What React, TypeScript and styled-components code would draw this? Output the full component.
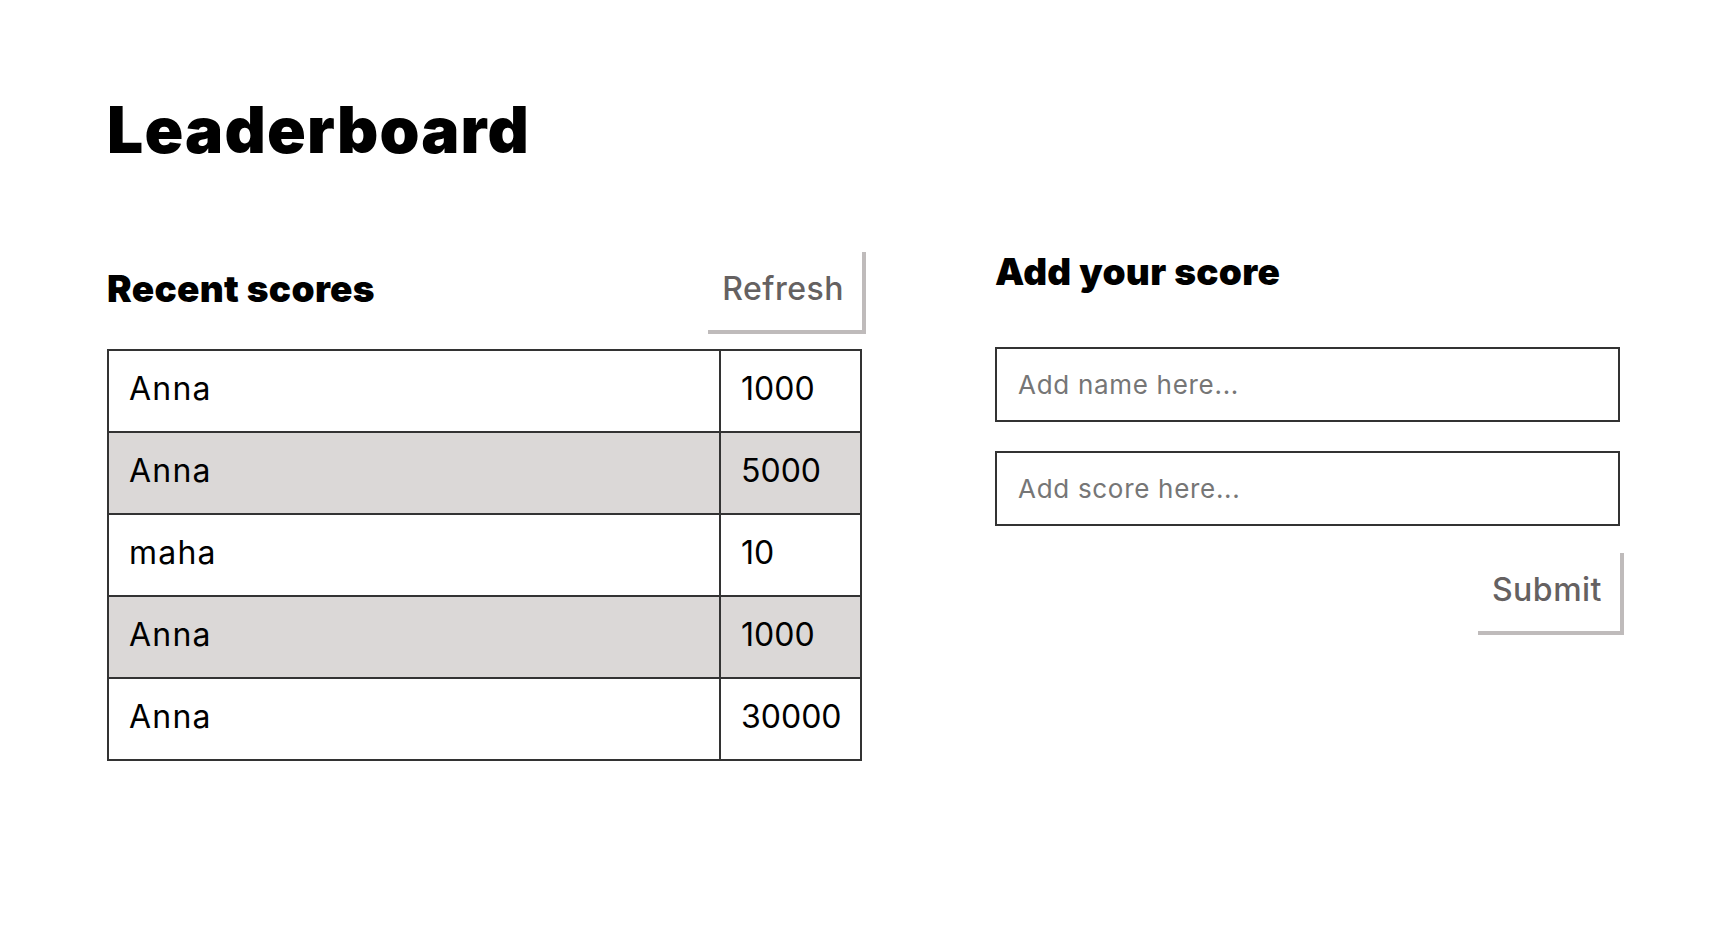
import styled, { createGlobalStyle } from "styled-components";

const scores = [
  { name: "Anna", score: 1000 },
  { name: "Anna", score: 5000 },
  { name: "maha", score: 10 },
  { name: "Anna", score: 1000 },
  { name: "Anna", score: 30000 },
];

export default function App() {
  return (
    <>
      <GlobalStyle />
      <S.Page>
        <S.Title>Leaderboard</S.Title>
        <S.Columns>
          <S.Section>
            <S.Header>
              <S.Heading>Recent scores</S.Heading>
              <S.Button type="button">Refresh</S.Button>
            </S.Header>
            <S.Table>
              <colgroup>
                <col />
                <S.ScoreCol />
              </colgroup>
              <tbody>
                {scores.map(({ name, score }, i) => (
                  <S.Row key={i} $shaded={i % 2 === 1}>
                    <S.Cell>{name}</S.Cell>
                    <S.Cell $narrow>{score}</S.Cell>
                  </S.Row>
                ))}
              </tbody>
            </S.Table>
          </S.Section>

          <S.Form onSubmit={(e) => e.preventDefault()}>
            <S.FormHeading>Add your score</S.FormHeading>
            <S.Input type="text" placeholder="Add name here..." />
            <S.Input type="text" placeholder="Add score here..." />
            <S.Actions>
              <S.Button type="submit">Submit</S.Button>
            </S.Actions>
          </S.Form>
        </S.Columns>
      </S.Page>
    </>
  );
}

const GlobalStyle = createGlobalStyle`
  body {
    margin: 0;
    background: #fff;
    font-family: Inter, "Open Sans", sans-serif;
    color: #000;
  }
`;

const Heading = styled.h2`
  margin: 0;
  font-size: 37px;
  line-height: 57px;
  font-weight: 900;
  letter-spacing: 0.3px;
`;

const S = {
  Page: styled.main`
    padding: 92px 110px 0 107px;
  `,

  Title: styled.h1`
    margin: 0 0 79px;
    font-size: 64px;
    line-height: 1.2;
    font-weight: 900;
    letter-spacing: 1.2px;
  `,

  Columns: styled.div`
    display: grid;
    grid-template-columns: 755px 625px;
    justify-content: space-between;
    align-items: start;
  `,

  Section: styled.section`
    display: flex;
    flex-direction: column;
  `,

  Header: styled.div`
    display: flex;
    justify-content: space-between;
    align-items: center;
    margin-bottom: 19px;
  `,

  Heading,

  FormHeading: styled(Heading)`
    line-height: 47px;
  `,

  Button: styled.button`
    padding: 16px 18px;
    border: none;
    background: #fff;
    box-shadow: 4px 4px 0 #bfbbbb;
    font-family: inherit;
    font-size: 32px;
    line-height: 50px;
    font-weight: 500;
    letter-spacing: 0.5px;
    color: #656161;
    cursor: pointer;
  `,

  Table: styled.table`
    width: 100%;
    table-layout: fixed;
    border-collapse: collapse;
  `,

  ScoreCol: styled.col`
    width: 141px;
  `,

  Row: styled.tr<{ $shaded?: boolean }>`
    background: ${({ $shaded }) => ($shaded ? "#dbd8d7" : "#fff")};
  `,

  Cell: styled.td<{ $narrow?: boolean }>`
    padding: ${({ $narrow }) => ($narrow ? "14px 10px 18px 20px" : "14px 20px 18px")};
    border: 2px solid #333;
    font-size: 32px;
    line-height: 48px;
    letter-spacing: ${({ $narrow }) => ($narrow ? "0" : "1.2px")};
    white-space: nowrap;
  `,

  Form: styled.form`
    display: flex;
    flex-direction: column;
  `,

  Input: styled.input`
    box-sizing: border-box;
    width: 100%;
    height: 75px;
    margin-top: 29px;
    padding: 0 21px;
    border: 2px solid #333;
    border-radius: 0;
    font-family: inherit;
    font-size: 26px;
    letter-spacing: 0.7px;
    color: #000;

    &:first-of-type {
      margin-top: 52px;
    }

    &::placeholder {
      color: #767676;
    }
  `,

  Actions: styled.div`
    display: flex;
    justify-content: flex-end;
    margin-top: 23px;
  `,
};
